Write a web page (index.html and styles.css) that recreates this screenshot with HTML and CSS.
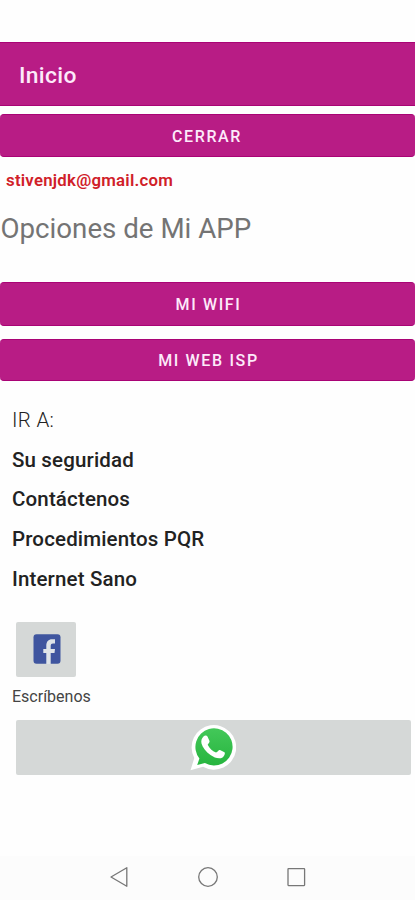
FILE: index.html
```html
<!DOCTYPE html>
<html lang="es">
<head>
<meta charset="utf-8">
<meta name="viewport" content="width=device-width, initial-scale=1">
<title>Inicio</title>
<link rel="stylesheet" href="styles.css">
</head>
<body>
<div class="screen">
  <header class="app-bar"><h1>Inicio</h1></header>
  <main>
    <button class="btn btn-close">CERRAR</button>
    <p class="email">stivenjdk@gmail.com</p>
    <h2 class="title">Opciones de Mi APP</h2>
    <button class="btn btn-wifi">MI WIFI</button>
    <button class="btn btn-web">MI WEB ISP</button>
    <nav class="links">
      <p class="go">IR A:</p>
      <a>Su seguridad</a>
      <a>Contáctenos</a>
      <a>Procedimientos PQR</a>
      <a>Internet Sano</a>
    </nav>
    <button class="tile tile-fb" aria-label="Facebook">
      <svg width="28" height="30" viewBox="0 0 28 30">
        <rect x=".5" y=".2" width="27" height="29.600" rx="3" fill="#3f559f"/>
        <path d="M13.300 30V19H10.300V15H13.300V12C13.300 7.500 15.500 5.300 19 5.300H22V9.500H20C18.500 9.500 17.700 10.300 17.700 12V15H22L21.500 19H17.700V30Z" fill="#dfe4e8"/>
      </svg>
    </button>
    <p class="write">Escríbenos</p>
    <button class="tile tile-wa" aria-label="WhatsApp">
      <svg width="46" height="47" viewBox="0 0 46 47">
        <path d="M.5 46.300L4.300 34A22.300 22.300 0 1 1 13 42.800Z" fill="#fff"/>
        <path d="M6.500 40.800L8.700 34.100A18.600 18.600 0 1 1 14.200 38.800Z" transform="translate(.7 .3)" fill="url(#wa)"/>
        <path d="M13.500 12.500C15 11 17 11.300 17.700 13L19.500 17C20 18.300 18 19.800 17.700 20.800C19.500 24.500 22.200 27 26 28.500C27.500 28.300 28.700 25.500 30 26L34.500 28.300C35.500 29 34.300 32.500 32.500 33.500C29 35.500 24.500 33.700 20.500 31C16 27.800 12.500 23.500 11.500 19.500C10.900 16.700 11.700 14.200 13.500 12.500Z" fill="#fff"/>
        <defs><linearGradient id="wa" x1="0" y1="0" x2="0" y2="1"><stop stop-color="#43c859"/><stop offset="1" stop-color="#27b53f"/></linearGradient></defs>
      </svg>
    </button>
  </main>
  <footer class="system-nav">
    <svg width="20" height="22" viewBox="0 0 20 22"><path d="M17.800 1.700V20.300L2 11Z"/></svg>
    <svg width="22" height="22" viewBox="0 0 22 22"><circle cx="11" cy="11" r="9.300"/></svg>
    <svg width="20" height="22" viewBox="0 0 20 22"><rect x="1" y="2.700" width="16.600" height="16.900" rx=".5"/></svg>
  </footer>
</div>
</body>
</html>
```
FILE: styles.css
```css
* { box-sizing: border-box; margin: 0; }
body { background: #fefefe; font-family: Roboto, sans-serif; color: #222; }
.screen { height: 900px; padding-top: 42px; display: flex; flex-direction: column; overflow: hidden; }
.app-bar { height: 64px; padding: 2px 19px 0; display: flex; align-items: center; background: #b81c85; border-top: 1px solid #a90375; border-bottom: 1px solid #a90375; }
h1 { font-size: 22.800px; font-weight: 500; letter-spacing: .35px; color: #fdeafa; }
main { flex: 1; display: flex; flex-direction: column; align-items: flex-start; }
button { border: 0; padding: 0; font-family: inherit; display: flex; align-items: center; justify-content: center; }
.btn { width: 100%; padding-top: 1px; padding-left: 2px; background: #b81c85; border-top: 1px solid #a90375; border-bottom: 1px solid #a90375; border-radius: 4px; color: #fdeafa; font-size: 16px; font-weight: 500; letter-spacing: 1.650px; }
.btn-close { height: 43px; margin-top: 8px; padding-right: 3px; }
.btn-wifi { height: 44px; margin-top: 35px; }
.btn-web { height: 42px; margin-top: 13px; }
.email { margin-top: 12px; padding-left: 6px; font-size: 16.800px; line-height: 22px; font-weight: 600; letter-spacing: .25px; color: #d02028; }
.title { margin-top: 19px; padding-left: .5px; height: 37px; font-size: 27.700px; line-height: 37px; font-weight: 400; color: #747474; }
.links { margin: 20px 0 0 12px; display: flex; flex-direction: column; font-size: 20.500px; line-height: 39.700px; font-weight: 500; letter-spacing: .15px; }
.go { font-weight: 300; letter-spacing: .3px; color: #222; }
.tile { background: #d5d8d7; border-radius: 2px; }
.tile-fb { width: 60px; height: 55px; margin: 22px 0 0 16px; padding-left: 1px; }
.write { margin: 9px 0 0 12px; font-size: 16px; line-height: 22px; color: #444; }
.tile-wa { width: 395px; height: 55px; margin: 12px 0 0 16px; padding-right: 2px; }
.system-nav { height: 44px; padding-bottom: 2px; background: #fcfcfc; display: flex; align-items: center; justify-content: center; gap: 68px; }
.system-nav svg { fill: none; stroke: #777; stroke-width: 1.300; stroke-linejoin: round; }
```
